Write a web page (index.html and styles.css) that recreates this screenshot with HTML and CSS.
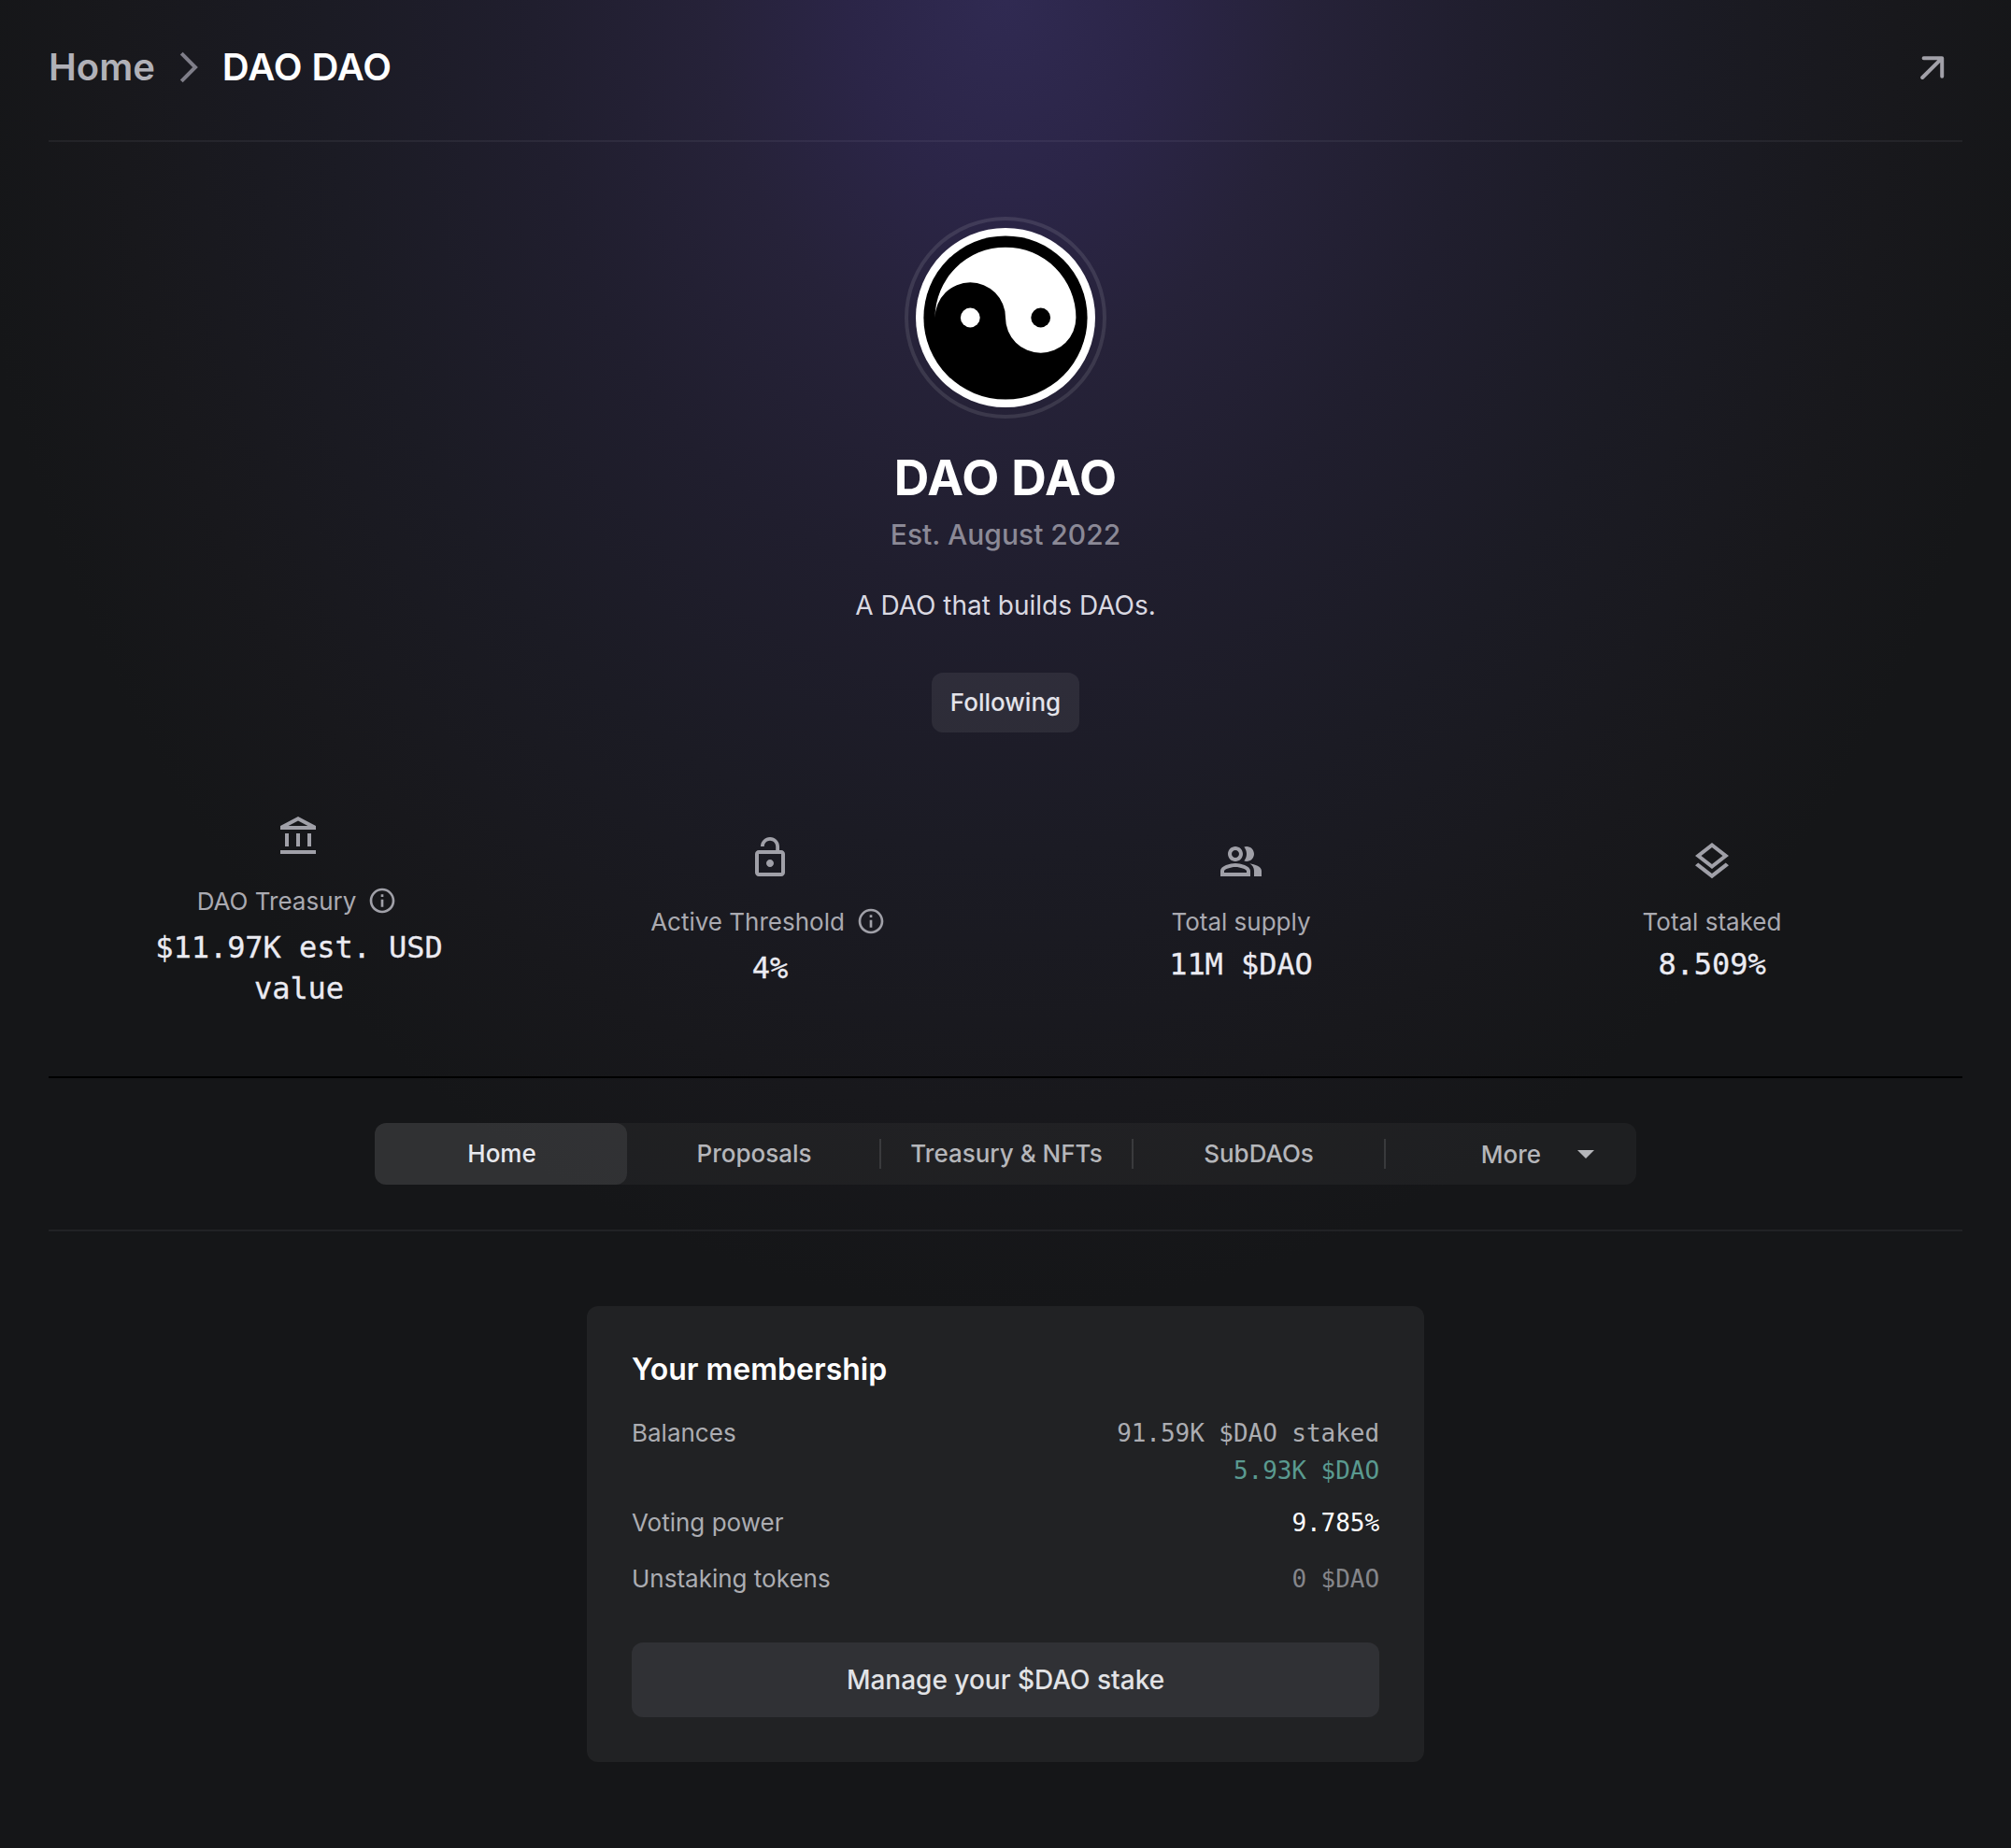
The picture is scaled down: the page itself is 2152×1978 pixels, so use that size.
FILE: index.html
```html
<!DOCTYPE html>
<html lang="en">
<head>
<meta charset="utf-8">
<title>DAO DAO</title>
<link rel="stylesheet" href="styles.css">
</head>
<body>
<div class="page">
  <header class="topbar">
    <nav class="crumbs">
      <a class="crumb">Home</a>
      <svg class="crumb-sep" viewBox="0 0 20 34"><path d="M2.2 2.2 17 17 2.2 31.8" fill="none" stroke="currentColor" stroke-width="4"/></svg>
      <span class="crumb crumb-current">DAO DAO</span>
    </nav>
    <svg class="open-icon" viewBox="0 0 26 26"><path d="M2.2 23 23 2.4M3.6 2.2H23.2V21.8" fill="none" stroke="currentColor" stroke-width="4" stroke-linecap="round" stroke-linejoin="round"/></svg>
  </header>

  <section class="hero">
    <div class="avatar">
      <svg viewBox="0 0 192 192">
        <circle cx="96" cy="96" r="96" fill="#fff"/>
        <circle cx="96" cy="96" r="87.6" fill="#000"/>
        <path d="M20.6 96A75.4 75.4 0 0 1 171.4 96A37.7 37.7 0 0 1 96 96A37.7 37.7 0 0 0 20.6 96Z" fill="#fff"/>
        <circle cx="58.3" cy="96" r="10.4" fill="#fff"/>
        <circle cx="133.7" cy="96" r="10.4" fill="#000"/>
      </svg>
    </div>
    <h1 class="name">DAO DAO</h1>
    <p class="established">Est. August 2022</p>
    <p class="description">A DAO that builds DAOs.</p>
    <button class="follow">Following</button>
  </section>

  <section class="stats">
    <div class="stat">
      <svg class="stat-icon" viewBox="0 0 24 24"><path d="M6.5 10h-2v7h2v-7zm6 0h-2v7h2v-7zm8.5 9H2v2h19v-2zm-2.500-9h-2v7h2v-7zm-7-6.740L16.710 6H6.290l5.210-2.740m0-2.260L2 6v2h19V6l-9.500-5z"/></svg>
      <div class="stat-label with-info">DAO Treasury
        <svg class="info" viewBox="0 0 24 24"><path d="M11 7h2v2h-2zm0 4h2v6h-2zm1-9C6.480 2 2 6.480 2 12s4.480 10 10 10 10-4.480 10-10S17.520 2 12 2zm0 18c-4.410 0-8-3.590-8-8s3.590-8 8-8 8 3.590 8 8-3.590 8-8 8z"/></svg>
      </div>
      <div class="stat-value">$11.97K est. USD value</div>
    </div>
    <div class="stat">
      <svg class="stat-icon" viewBox="0 0 24 24"><path d="M12 17c1.100 0 2-.9 2-2s-.9-2-2-2-2 .9-2 2 .9 2 2 2zm6-9h-1V6c0-2.760-2.240-5-5-5S7 3.240 7 6h1.900c0-1.710 1.390-3.100 3.100-3.100 1.710 0 3.100 1.390 3.100 3.100v2H6c-1.100 0-2 .9-2 2v10c0 1.100.9 2 2 2h12c1.100 0 2-.9 2-2V10c0-1.100-.9-2-2-2zm0 12H6V10h12v10z"/></svg>
      <div class="stat-label with-info">Active Threshold
        <svg class="info" viewBox="0 0 24 24"><path d="M11 7h2v2h-2zm0 4h2v6h-2zm1-9C6.480 2 2 6.480 2 12s4.480 10 10 10 10-4.480 10-10S17.520 2 12 2zm0 18c-4.410 0-8-3.590-8-8s3.590-8 8-8 8 3.590 8 8-3.590 8-8 8z"/></svg>
      </div>
      <div class="stat-value">4%</div>
    </div>
    <div class="stat">
      <svg class="stat-icon" viewBox="0 0 24 24"><path d="M16.670 13.130C18.040 14.060 19 15.320 19 17v3h4v-3c0-2.180-3.570-3.470-6.330-3.870zM15 12c2.210 0 4-1.790 4-4s-1.790-4-4-4c-.47 0-.91.1-1.330.24C14.500 5.270 15 6.580 15 8s-.5 2.730-1.330 3.760c.42.14.86.24 1.330.24zM9 12c2.210 0 4-1.790 4-4s-1.790-4-4-4-4 1.790-4 4 1.790 4 4 4zm0-6c1.100 0 2 .9 2 2s-.9 2-2 2-2-.9-2-2 .9-2 2-2zm0 7c-2.670 0-8 1.340-8 4v3h16v-3c0-2.660-5.330-4-8-4zm6 5H3v-.99C3.200 16.290 6.300 15 9 15s5.800 1.290 6 2v1z"/></svg>
      <div class="stat-label">Total supply</div>
      <div class="stat-value">11M $DAO</div>
    </div>
    <div class="stat">
      <svg class="stat-icon" viewBox="0 0 24 24"><path d="M11.990 18.540l-7.370-5.730L3 14.070l9 7 9-7-1.630-1.270zM12 16l7.360-5.730L21 9l-9-7-9 7 1.630 1.270L12 16zm0-11.470L17.740 9 12 13.470 6.260 9 12 4.530z"/></svg>
      <div class="stat-label">Total staked</div>
      <div class="stat-value">8.509%</div>
    </div>
  </section>

  <div class="tabs-wrap">
    <nav class="tabs">
      <a class="tab tab-active">Home</a>
      <a class="tab">Proposals</a>
      <a class="tab tab-split">Treasury &amp; NFTs</a>
      <a class="tab tab-split">SubDAOs</a>
      <a class="tab tab-split tab-more">More
        <svg class="caret" viewBox="0 0 18 9"><path d="M0 0h18L9 9z" fill="currentColor"/></svg>
      </a>
    </nav>
  </div>

  <main class="card">
    <h2 class="card-title">Your membership</h2>
    <dl class="rows">
      <div class="row"><dt>Balances</dt><dd><span>91.59K $DAO staked</span><span class="available">5.93K $DAO</span></dd></div>
      <div class="row row-power"><dt>Voting power</dt><dd class="strong">9.785%</dd></div>
      <div class="row row-unstaking"><dt>Unstaking tokens</dt><dd class="muted">0 $DAO</dd></div>
    </dl>
    <button class="manage">Manage your $DAO stake</button>
  </main>
</div>
</body>
</html>
```

FILE: styles.css
```css
* { box-sizing: border-box; margin: 0; padding: 0; }

body {
  background-color: #151618;
  font-family: Inter, "Liberation Sans", sans-serif;
  color: #fff;
}

.page {
  height: 1978px;
  padding: 0 52px;
  background: radial-gradient(ellipse 1120px 1400px at 50% 0,
    #302a52 0%, #2b2547 15%, #262239 28%, #201e2e 45%,
    #1b1b24 65%, #18181c 85%, #151618 100%) no-repeat;
}

.topbar {
  display: flex;
  align-items: center;
  justify-content: space-between;
  height: 152px;
  padding: 0 19px 6px 0;
  border-bottom: 2px solid rgba(243, 246, 248, 0.06);
}
.crumbs { display: flex; align-items: center; }
.crumb { font-size: 40px; font-weight: 600; line-height: 48px; color: #b1b1b8; }
.crumb-sep { width: 20px; height: 34px; margin: 0 26px; color: #7f7e89; }
.crumb-current { color: #fff; }
.open-icon { width: 26px; height: 26px; margin-top: 1px; color: #a2a1a9; }

.hero { display: flex; flex-direction: column; align-items: center; padding-top: 80px; }
.avatar {
  width: 216px;
  height: 216px;
  padding: 8px;
  border: 4px solid rgba(243, 246, 248, 0.11);
  border-radius: 50%;
}
.avatar svg { display: block; width: 192px; height: 192px; margin: 0; }
.name { margin-top: 32px; font-size: 52px; font-weight: 700; line-height: 64px; letter-spacing: 0.3px; }
.established { margin-top: 8px; font-size: 30px; font-weight: 500; line-height: 40px; color: #8b8996; }
.description { margin-top: 36px; font-size: 28px; line-height: 40px; color: #dad9e2; }
.follow {
  height: 64px;
  margin-top: 52px;
  padding: 0 20px;
  border: 0;
  border-radius: 12px;
  background: rgba(243, 246, 248, 0.08);
  font: 500 26px/40px Inter, sans-serif;
  color: #e3e3ea;
}

.stats {
  display: grid;
  grid-template-columns: repeat(4, 1fr);
  align-items: center;
  padding: 88px 16px 72px;
  border-bottom: 2px solid #000;
}
.stat { display: flex; flex-direction: column; align-items: center; }
.stat-icon { width: 48px; height: 48px; fill: #a0a0a8; }
.stat-label {
  display: flex;
  align-items: center;
  gap: 12px;
  height: 32px;
  margin: 24px 0 8px;
  font-size: 26px;
  color: #aaaab1;
}
.with-info { height: 40px; padding-right: 4px; }
.info { width: 32px; height: 32px; fill: #a0a0a8; }
.stat-value {
  max-width: 380px;
  font: 400 32px/44px "DejaVu Sans Mono", monospace;
  letter-spacing: -0.06px;
  text-align: center;
  color: #ebebf2;
  -webkit-text-stroke: 0.3px #ebebf2;
}

.tabs-wrap {
  display: flex;
  justify-content: center;
  padding: 48px 0;
  border-bottom: 2px solid rgba(243, 246, 248, 0.06);
}
.tabs {
  display: grid;
  grid-template-columns: repeat(5, 270px);
  height: 66px;
  border-radius: 12px;
  background: rgba(243, 246, 248, 0.04);
}
.tab {
  display: flex;
  align-items: center;
  justify-content: center;
  padding: 0 0 2px 2px;
  font-size: 26px;
  font-weight: 500;
  color: #b5b6ba;
}
.tab-active { border-radius: 12px; background: rgba(243, 246, 248, 0.085); color: #e8e9ee; }
.tab-split {
  background: linear-gradient(rgba(243, 246, 248, 0.12), rgba(243, 246, 248, 0.12)) 0 50% / 2px 32px no-repeat;
}
.tab-more { gap: 39px; padding: 0 0 0 59px; }
.caret { width: 18px; height: 9px; }

.card {
  width: 896px;
  height: 488px;
  margin: 80px auto 0;
  padding: 48px;
  border-radius: 12px;
  background: #212224;
}
.card-title { font-size: 32px; font-weight: 600; line-height: 40px; }
.rows { margin-top: 28px; }
.row { display: flex; justify-content: space-between; line-height: 40px; }
.row-power { margin-top: 16px; }
.row-unstaking { margin-top: 20px; }
dt { font-size: 26px; color: #acadb2; }
dd {
  display: flex;
  flex-direction: column;
  align-items: flex-end;
  font: 400 26px/40px "DejaVu Sans Mono", monospace;
  letter-spacing: -0.05px;
  color: #acadb2;
}
.available { color: #5a9a90; }
.strong { color: #fff; }
.muted { color: #85868b; }
.manage {
  display: block;
  width: 100%;
  height: 80px;
  margin-top: 48px;
  border: 0;
  border-radius: 12px;
  background: #303135;
  font: 500 28px/40px Inter, sans-serif;
  color: #e2e3e6;
}
```
